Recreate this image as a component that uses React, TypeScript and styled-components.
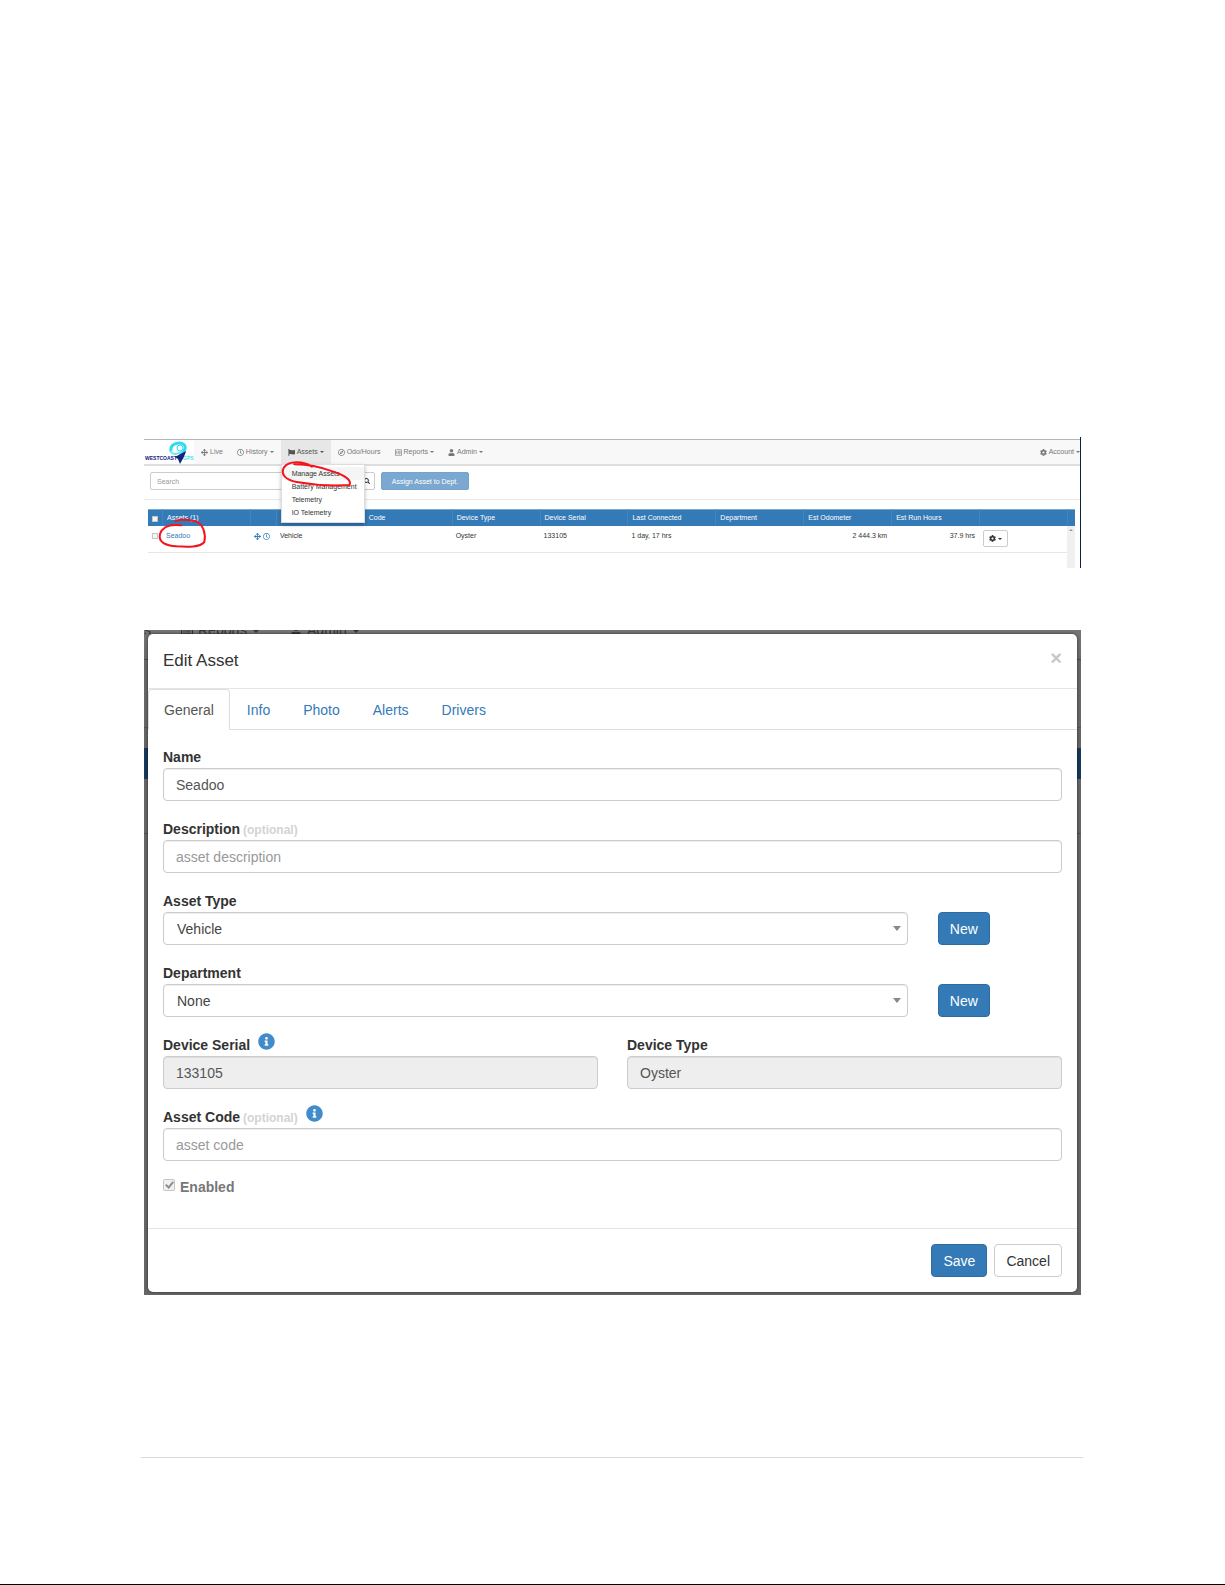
import React from 'react';
import styled, { createGlobalStyle, css } from 'styled-components';
import {
  FaArrowsAlt,
  FaCog,
  FaFlag,
  FaInfoCircle,
  FaRegClock,
  FaRegCompass,
  FaRegListAlt,
  FaSearch,
  FaUser,
} from 'react-icons/fa';

const Global = createGlobalStyle`
  *, *::before, *::after { box-sizing: border-box; }
  body { margin: 0; background: #fff; color: #333; }
  body, button, input, select {
    font-family: "Liberation Sans", Arial, Helvetica, sans-serif;
  }
`;

/* ---------- document page ---------- */

const Page = styled.main`
  padding: 437px 142px 126px 141px;
  border-bottom: 1px solid #000;
`;

const Figures = styled.div`
  display: flex;
  flex-direction: column;
  gap: 62px;
  margin: 0 2px 162px 3px;
`;

const PageRule = styled.hr`
  margin: 0;
  border: 0;
  border-top: 1px solid #d9d9d9;
`;

/* ---------- asset list ---------- */

const ListPanel = styled.section`
  position: relative;
  padding-top: 2px;
  border-right: 1px solid #0b2240;
  font-size: 7px;
  line-height: 10px;
`;

const NavBar = styled.nav`
  display: flex;
  align-items: stretch;
  height: 27px;
  background: #f8f8f8;
  border-top: 1px solid #b5b5b5;
  border-bottom: 2px solid #dedede;
`;

const Brand = styled.a`
  display: block;
  width: 50px;
  height: 24px;
  background: #fff;
`;

const NavItem = styled.div`
  position: relative;
  display: flex;
`;

const NavLink = styled.a<{ $active?: boolean; $end?: boolean }>`
  display: flex;
  align-items: center;
  gap: 2px;
  padding: 0 7px;
  color: #777;
  text-decoration: none;
  ${(p) => p.$active && css`background: #e7e7e7; color: #555;`}
  ${(p) => p.$end && css`padding-right: 0;`}
`;

const Caret = styled.span<{ $large?: boolean }>`
  border: ${(p) => (p.$large ? 4 : 2)}px solid transparent;
  border-top-color: currentColor;
  border-bottom: 0;
`;

const Spacer = styled.div`
  flex: 1;
`;

const Menu = styled.ul`
  position: absolute;
  z-index: 2;
  top: 100%;
  left: 0;
  width: 84px;
  margin: 0;
  padding: 2px 0 3px;
  list-style: none;
  background: #fff;
  border: 1px solid #ddd;
  box-shadow: 0 2px 4px rgba(0, 0, 0, 0.25);
`;

const MenuLink = styled.a<{ $hover?: boolean }>`
  display: block;
  padding: 0 10px;
  line-height: 13px;
  white-space: nowrap;
  color: #333;
  text-decoration: none;
  background: ${(p) => (p.$hover ? '#f5f5f5' : 'transparent')};
`;

const Toolbar = styled.div`
  display: flex;
  gap: 6px;
  padding: 6px 6px 9px;
  border-bottom: 1px solid #e9e9e9;
`;

const SearchBox = styled.div`
  display: flex;
  width: 225px;
  height: 18px;
  border: 1px solid #ccc;
  border-radius: 2px;
`;

const SearchInput = styled.input`
  flex: 1;
  min-width: 0;
  padding: 0 6px;
  border: 0;
  background: transparent;
  font-size: 7px;
  &::placeholder { color: #999; }
`;

const SearchButton = styled.button`
  display: flex;
  align-items: center;
  justify-content: center;
  width: 16px;
  padding: 0;
  border: 0;
  border-left: 1px solid #ccc;
  background: transparent;
  color: #333;
`;

const AssignButton = styled.button`
  width: 88px;
  height: 18px;
  padding: 0;
  border: 1px solid #74a3cd;
  border-radius: 2px;
  background: #7ba8d0;
  color: #fff;
  font-size: 7px;
`;

const TableWrap = styled.div`
  padding: 9px 5px 0 4px;
`;

const Table = styled.table`
  width: 100%;
  table-layout: fixed;
  border-collapse: separate;
  border-spacing: 0;
`;

const Col = styled.col<{ $w?: number }>`
  ${(p) => p.$w && css`width: ${p.$w}px;`}
`;

const Th = styled.th`
  height: 17px;
  padding: 0 4px;
  overflow: hidden;
  text-align: left;
  font-weight: 400;
  white-space: nowrap;
  color: #fff;
  background: #337ab7;
  border-top: 1px solid #7fa9d0;
  border-left: 1px solid #4384bd;
  &:first-child { border-left: 0; }
`;

const Td = styled.td<{ $right?: boolean }>`
  height: 27px;
  padding: 5px 4px 0;
  vertical-align: top;
  white-space: nowrap;
  text-align: ${(p) => (p.$right ? 'right' : 'left')};
  border-bottom: 1px solid #e6e6e6;
`;

const ActionTd = styled(Td)`
  padding-top: 4px;
`;

const FillerCell = styled.td`
  height: 15px;
  padding: 0;
`;

const ScrollCell = styled.td`
  padding: 3px 2px 0;
  vertical-align: top;
  background: #f0f0f0;
`;

const ScrollUp = styled.span`
  display: block;
  border: 2px solid transparent;
  border-top: 0;
  border-bottom-color: #999;
`;

const RowCheck = styled.input`
  display: block;
  appearance: none;
  width: 6px;
  height: 6px;
  margin: 2px 0 0;
  background: #f4f4f4;
  border: 1px solid #c4c4c4;
`;

const AssetLink = styled.a`
  color: #337ab7;
  text-decoration: none;
`;

const RowIcons = styled.span`
  display: flex;
  gap: 2px;
  height: 10px;
  align-items: center;
  color: #337ab7;
`;

const GearButton = styled.button`
  display: flex;
  align-items: center;
  justify-content: center;
  gap: 2px;
  width: 25px;
  height: 17px;
  padding: 0;
  border: 1px solid #ccc;
  border-radius: 2px;
  background: #fff;
  color: #333;
`;

const RedInk = styled.svg`
  position: absolute;
  z-index: 3;
  top: 0;
  left: 0;
  pointer-events: none;
`;

/* ---------- edit dialog ---------- */

const Backdrop = styled.section`
  position: relative;
  padding: 4px 4px 3px;
  background: linear-gradient(
    #757575 0, #6b6b6b 29px, #4a4a4a 29px, #4a4a4a 30px,
    #686868 30px, #686868 97px, #555 97px, #555 98px,
    #666 98px, #666 118px, #17395a 118px, #17395a 149px,
    #666 149px, #666 203px, #4d4d4d 203px, #4d4d4d 204px,
    #666 204px
  );
`;

/* Strip of the page behind the dialog that stays visible above its edge */
const DimmedNav = styled.div`
  position: absolute;
  top: 0;
  left: 0;
  right: 0;
  height: 4px;
  overflow: hidden;
  display: flex;
  align-items: flex-end;
  gap: 30px;
  color: #353535;
  font-size: 14px;
  line-height: 7px;
`;

const DimmedItem = styled.span`
  display: flex;
  align-items: center;
  gap: 5px;
  height: 7px;
`;

const Dialog = styled.div`
  position: relative;
  background: #fff;
  border-radius: 5px;
  box-shadow: 0 0 3px rgba(0, 0, 0, 0.6);
  font-size: 14px;
  line-height: 20px;
`;

const DialogHeader = styled.header`
  display: flex;
  justify-content: space-between;
  padding: 17px 15px;
  border-bottom: 1px solid #e5e5e5;
`;

const Title = styled.h1`
  margin: 0;
  font-size: 17px;
  font-weight: 400;
  line-height: 20px;
`;

const CloseButton = styled.button`
  height: 14px;
  padding: 0;
  border: 0;
  background: none;
  color: #c8c8c8;
  font-size: 20px;
  font-weight: 700;
  line-height: 14px;
`;

const Tabs = styled.nav`
  display: flex;
  gap: 1px;
  height: 41px;
  border-bottom: 1px solid #ddd;
`;

const Tab = styled.a<{ $active?: boolean }>`
  height: 41px;
  padding: 10px 15px;
  border: 1px solid transparent;
  border-radius: 4px 4px 0 0;
  color: #337ab7;
  text-decoration: none;
  ${(p) => p.$active && css`
    color: #555;
    background: #fff;
    border-color: #ddd #ddd #fff;
  `}
`;

const Form = styled.form`
  margin: 0;
`;

const Fields = styled.div`
  display: flex;
  flex-direction: column;
  gap: 18px;
  padding: 17px 15px 33px;
`;

const Row = styled.div<{ $cols: string; $gap: number }>`
  display: grid;
  grid-template-columns: ${(p) => p.$cols};
  column-gap: ${(p) => p.$gap}px;
  align-items: end;
`;

const Field = styled.div`
  display: flex;
  flex-direction: column;
  gap: 1px;
`;

const LabelLine = styled.div`
  display: flex;
  height: 20px;
`;

const Label = styled.label<{ $muted?: boolean }>`
  font-size: 14px;
  font-weight: 700;
  color: ${(p) => (p.$muted ? '#777' : '#333')};
`;

const Optional = styled.small`
  margin-left: 3px;
  font-size: 12px;
  font-weight: 700;
  color: #d3d3d3;
`;

const InfoIcon = styled(FaInfoCircle)`
  width: 17px;
  height: 17px;
  margin: -2px 0 0 8px;
  color: #428bca;
`;

const control = css`
  width: 100%;
  height: 33px;
  padding: 0 12px;
  border: 1px solid #ccc;
  border-radius: 4px;
  background: #fff;
  box-shadow: inset 0 1px 1px rgba(0, 0, 0, 0.075);
  font-size: 14px;
  color: #555;
`;

const Input = styled.input`
  ${control}
  &::placeholder { color: #999; }
  &:read-only { background: #eee; }
`;

const SelectWrap = styled.div`
  position: relative;
  &::after {
    content: '';
    position: absolute;
    top: 14px;
    right: 7px;
    border: 4px solid transparent;
    border-top: 5px solid #888;
    border-bottom: 0;
    pointer-events: none;
  }
`;

const Select = styled.select`
  ${control}
  appearance: none;
  padding: 0 13px;
  color: #444;
`;

const Button = styled.button<{ $primary?: boolean }>`
  justify-self: start;
  height: 33px;
  padding: 0 11px;
  border: 1px solid ${(p) => (p.$primary ? '#2e6da4' : '#ccc')};
  border-radius: 4px;
  background: ${(p) => (p.$primary ? '#337ab7' : '#fff')};
  color: ${(p) => (p.$primary ? '#fff' : '#333')};
  font-size: 14px;
`;

const CheckLine = styled.div`
  display: flex;
  gap: 5px;
  height: 16px;
  line-height: 16px;
`;

const Check = styled.input`
  appearance: none;
  display: grid;
  place-items: center;
  width: 12px;
  height: 12px;
  margin: 0;
  border: 1px solid #c6c6c6;
  border-radius: 2px;
  background: #f1f1f1;
  &:checked::after {
    content: '';
    width: 5px;
    height: 8px;
    margin-bottom: 2px;
    border: solid #8d8d8d;
    border-width: 0 2px 2px 0;
    transform: rotate(40deg);
  }
`;

const DialogFooter = styled.footer`
  display: flex;
  justify-content: flex-end;
  gap: 7px;
  padding: 15px;
  border-top: 1px solid #e5e5e5;
`;

const LogoText = styled.text`
  font-family: "Liberation Sans", Arial, sans-serif;
  font-size: 5px;
  font-weight: 700;
`;

const Logo = () => (
  <svg width="50" height="24" viewBox="0 0 50 24" role="img" aria-label="Westcoast GPS">
    <path
      d="M27 11c-1-5 3-8 8-8 4 0 7 2 6 6-1 3-3 5-5 7"
      fill="none"
      stroke="#35d9ee"
      strokeWidth="3"
    />
    <circle cx="36" cy="8" r="3" fill="#e4fbfd" stroke="#35d9ee" strokeWidth="1" />
    <path d="M26 11c3 4 8 4 12 0" fill="none" stroke="#6fe6f3" strokeWidth="2" />
    <LogoText x="1" y="20" fill="#15217c">WESTCOAST</LogoText>
    <LogoText x="39" y="20" fill="#4adff0">GPS</LogoText>
    <path d="M42 11 31 17l3 2 2 5c1-2 5-8 6-13z" fill="#15217c" />
  </svg>
);

const headings = [
  'Type',
  'Code',
  'Device Type',
  'Device Serial',
  'Last Connected',
  'Department',
  'Est Odometer',
  'Est Run Hours',
];

const menuItems = ['Manage Assets', 'Battery Management', 'Telemetry', 'IO Telemetry'];
const tabs = ['General', 'Info', 'Photo', 'Alerts', 'Drivers'];

function AssetList() {
  return (
    <ListPanel>
      <NavBar>
        <Brand href="#"><Logo /></Brand>
        <NavLink href="#"><FaArrowsAlt size={7} />Live</NavLink>
        <NavLink href="#"><FaRegClock size={7} />History<Caret /></NavLink>
        <NavItem>
          <NavLink href="#" $active><FaFlag size={7} />Assets<Caret /></NavLink>
          <Menu>
            {menuItems.map((item, i) => (
              <li key={item}><MenuLink href="#" $hover={i === 0}>{item}</MenuLink></li>
            ))}
          </Menu>
        </NavItem>
        <NavLink href="#"><FaRegCompass size={7} />Odo/Hours</NavLink>
        <NavLink href="#"><FaRegListAlt size={7} />Reports<Caret /></NavLink>
        <NavLink href="#"><FaUser size={7} />Admin<Caret /></NavLink>
        <Spacer />
        <NavLink href="#" $end><FaCog size={7} />Account<Caret /></NavLink>
      </NavBar>

      <Toolbar>
        <SearchBox>
          <SearchInput type="search" placeholder="Search" aria-label="Search" />
          <SearchButton type="button" aria-label="Run search"><FaSearch size={6} /></SearchButton>
        </SearchBox>
        <AssignButton type="button">Assign Asset to Dept.</AssignButton>
      </Toolbar>

      <TableWrap>
        <Table>
          <colgroup>
            <Col $w={14} />
            <Col />
            <Col $w={26} />
            {headings.map((h) => <Col key={h} />)}
            <Col />
            <Col $w={8} />
          </colgroup>
          <thead>
            <tr>
              <Th><RowCheck type="checkbox" aria-label="Select all" /></Th>
              <Th>Assets (1)</Th>
              <Th />
              {headings.map((h) => <Th key={h}>{h}</Th>)}
              <Th />
              <Th />
            </tr>
          </thead>
          <tbody>
            <tr>
              <Td><RowCheck type="checkbox" aria-label="Select Seadoo" /></Td>
              <Td><AssetLink href="#">Seadoo</AssetLink></Td>
              <Td><RowIcons><FaArrowsAlt size={7} /><FaRegClock size={7} /></RowIcons></Td>
              <Td>Vehicle</Td>
              <Td />
              <Td>Oyster</Td>
              <Td>133105</Td>
              <Td>1 day, 17 hrs</Td>
              <Td />
              <Td $right>2 444.3 km</Td>
              <Td $right>37.9 hrs</Td>
              <ActionTd>
                <GearButton type="button" aria-label="Row actions"><FaCog size={7} /><Caret /></GearButton>
              </ActionTd>
              <ScrollCell rowSpan={2}><ScrollUp /></ScrollCell>
            </tr>
            <tr><FillerCell colSpan={12} /></tr>
          </tbody>
        </Table>
      </TableWrap>

      <RedInk width="230" height="130" viewBox="12 21 690 390" aria-hidden="true">
        <g fill="none" stroke="#f4141c" strokeWidth="6" strokeLinecap="round" strokeLinejoin="round">
          <path d="M516 110C490 92 445 92 432 112C420 134 438 150 470 156C520 165 580 168 629 165C635 148 612 136 580 125C545 112 505 103 463 103" />
          <path d="M124 286C95 282 68 288 60 312C54 338 78 346 110 349C145 351 180 352 193 336C198 312 190 282 168 274C148 268 125 268 106 272" />
        </g>
      </RedInk>
    </ListPanel>
  );
}

function EditAsset() {
  return (
    <Backdrop>
      <DimmedNav aria-hidden="true">
        <DimmedItem>s</DimmedItem>
        <DimmedItem><FaRegListAlt size={12} />Reports<Caret $large /></DimmedItem>
        <DimmedItem><FaUser size={12} />Admin<Caret $large /></DimmedItem>
      </DimmedNav>
      <Dialog role="dialog" aria-labelledby="dialog-title">
        <DialogHeader>
          <Title id="dialog-title">Edit Asset</Title>
          <CloseButton type="button" aria-label="Close">×</CloseButton>
        </DialogHeader>
        <Tabs>
          {tabs.map((t, i) => <Tab key={t} href="#" $active={i === 0}>{t}</Tab>)}
        </Tabs>
        <Form onSubmit={(e) => e.preventDefault()}>
          <Fields>
            <Field>
              <LabelLine><Label htmlFor="name">Name</Label></LabelLine>
              <Input id="name" defaultValue="Seadoo" />
            </Field>
            <Field>
              <LabelLine>
                <Label htmlFor="description">Description<Optional>(optional)</Optional></Label>
              </LabelLine>
              <Input id="description" placeholder="asset description" />
            </Field>
            <Row $cols="6fr 1fr" $gap={30}>
              <Field>
                <LabelLine><Label htmlFor="type">Asset Type</Label></LabelLine>
                <SelectWrap>
                  <Select id="type"><option>Vehicle</option></Select>
                </SelectWrap>
              </Field>
              <Button type="button" $primary>New</Button>
            </Row>
            <Row $cols="6fr 1fr" $gap={30}>
              <Field>
                <LabelLine><Label htmlFor="department">Department</Label></LabelLine>
                <SelectWrap>
                  <Select id="department"><option>None</option></Select>
                </SelectWrap>
              </Field>
              <Button type="button" $primary>New</Button>
            </Row>
            <Row $cols="1fr 1fr" $gap={29}>
              <Field>
                <LabelLine><Label htmlFor="serial">Device Serial</Label><InfoIcon /></LabelLine>
                <Input id="serial" defaultValue="133105" readOnly />
              </Field>
              <Field>
                <LabelLine><Label htmlFor="device">Device Type</Label></LabelLine>
                <Input id="device" defaultValue="Oyster" readOnly />
              </Field>
            </Row>
            <Field>
              <LabelLine>
                <Label htmlFor="code">Asset Code<Optional>(optional)</Optional></Label>
                <InfoIcon />
              </LabelLine>
              <Input id="code" placeholder="asset code" />
            </Field>
            <CheckLine>
              <Check id="enabled" type="checkbox" defaultChecked disabled />
              <Label htmlFor="enabled" $muted>Enabled</Label>
            </CheckLine>
          </Fields>
          <DialogFooter>
            <Button type="submit" $primary>Save</Button>
            <Button type="button">Cancel</Button>
          </DialogFooter>
        </Form>
      </Dialog>
    </Backdrop>
  );
}

export default function App() {
  return (
    <>
      <Global />
      <Page>
        <Figures>
          <AssetList />
          <EditAsset />
        </Figures>
        <PageRule />
      </Page>
    </>
  );
}
